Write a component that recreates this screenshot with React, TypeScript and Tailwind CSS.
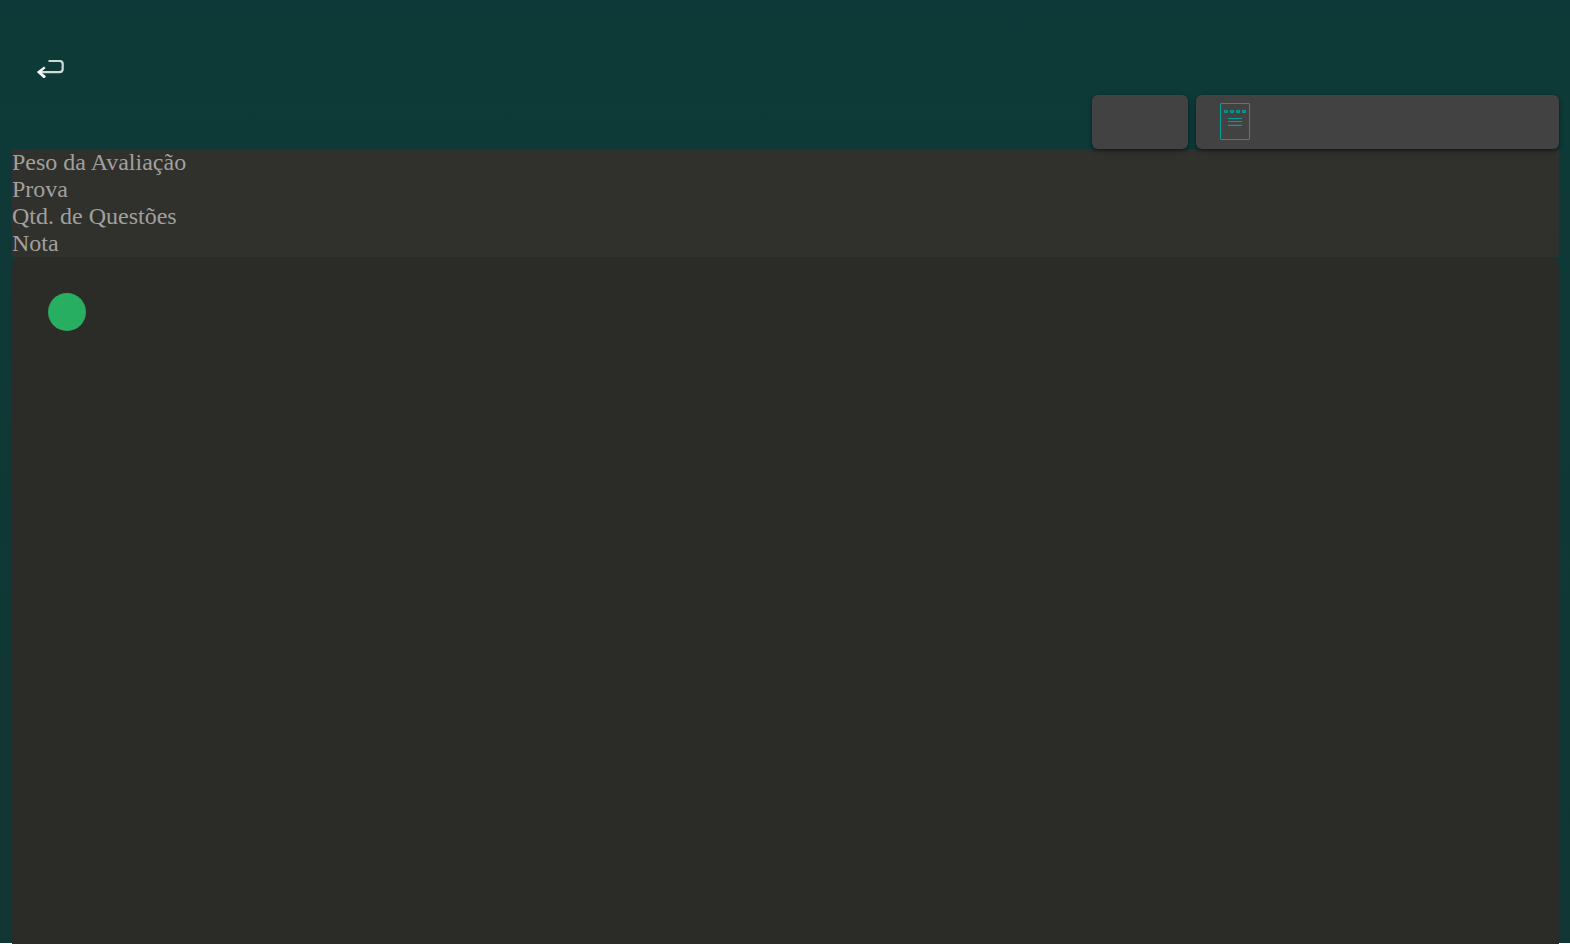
const details = ['Peso da Avaliação', 'Prova', 'Qtd. de Questões', 'Nota'];

function BackIcon() {
  return (
    <svg viewBox="0 0 28 18" className="h-[18px] w-7" fill="none" aria-hidden="true">
      <path
        d="M12.5 1H23.5Q26.7 1 26.7 4V9Q26.7 12.2 23.5 12.2H4"
        stroke="#cfd9d7"
        strokeWidth="2.2"
      />
      <path d="M0.8 12L8 6.6L9.6 8L6 11.2V13L9.8 16L9 18H7.4Z" fill="#f4f6f6" />
    </svg>
  );
}

function NotepadIcon() {
  return (
    <svg viewBox="0 0 30 38" className="h-[38px] w-[30px]" fill="none" stroke="#009f9a" aria-hidden="true">
      <rect x="0.5" y="0.5" width="29" height="36" rx="0.5" />
      {[6, 12, 18, 24].map((x) => (
        <ellipse key={x} cx={x} cy="8.5" rx="1.5" ry="1.1" strokeWidth="1.4" />
      ))}
      <path d="M8 15.5H22M8 18.5H22M8 22.5H22" />
      <path d="M8 21.5H22" strokeOpacity="0.25" />
    </svg>
  );
}

export default function App() {
  return (
    <div className="flex min-h-screen flex-col border-b border-white bg-linear-to-b from-[#0d3a38] to-[#113633] bg-origin-border pr-[11px] pl-3 font-['Liberation_Serif',serif]">
      <header className="flex h-[95px] items-start px-6 pt-[60px]">
        <button type="button" aria-label="Voltar" className="cursor-pointer">
          <BackIcon />
        </button>
      </header>

      <main className="-mb-px flex flex-1 flex-col">
        <div className="relative flex justify-end gap-2">
          <button
            type="button"
            aria-label="Salvar"
            className="h-[54px] w-24 rounded-md bg-[#424242] shadow-[0_2px_4px_rgba(0,0,0,0.5)]"
          />
          <button
            type="button"
            aria-label="Avaliação"
            className="flex h-[54px] w-[363px] items-center rounded-md bg-[#424242] px-6 shadow-[0_2px_4px_rgba(0,0,0,0.5)]"
          >
            <NotepadIcon />
          </button>
        </div>

        <ul className="bg-[#30302c] text-2xl leading-[27px] text-[#a0a09e]">
          {details.map((detail) => (
            <li key={detail}>{detail}</li>
          ))}
        </ul>

        <section className="flex-1 rounded-t-[10px] bg-[#2b2b27] p-9">
          <button type="button" aria-label="Adicionar questão" className="block size-[38px] rounded-full bg-[#27ae60]" />
        </section>
      </main>
    </div>
  );
}
